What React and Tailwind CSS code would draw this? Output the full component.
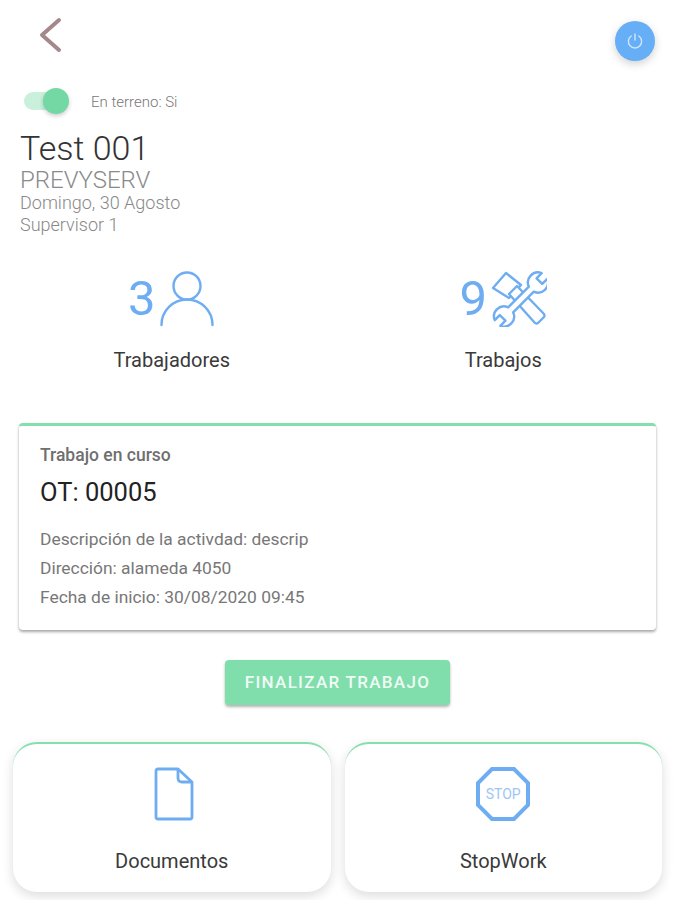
import React from 'react';

const BLUE = '#6fadf2';

const BackIcon = () => (
  <svg width="24" height="36" viewBox="0 0 24 36" fill="none" stroke="#a5888c" strokeWidth="4" strokeLinecap="round" strokeLinejoin="round">
    <path d="M20 3 L3 18 L20 33" />
  </svg>
);

const PowerIcon = () => (
  <svg width="18" height="18" viewBox="0 0 18 18" fill="none" stroke="#cfe5fb" strokeWidth="1.4" strokeLinecap="round">
    <path d="M9 2 V8" />
    <path d="M5.2 4 A6.6 6.6 0 1 0 12.8 4" />
  </svg>
);

const PersonIcon = () => (
  <svg width="56" height="56" viewBox="0 0 56 56" fill="none" stroke={BLUE} strokeWidth="2.4" strokeLinecap="round">
    <circle cx="27" cy="15" r="13.5" />
    <path d="M1.500 54 A25.500 25.500 0 0 1 52.500 54" />
  </svg>
);

const ToolsIcon = () => (
  <svg width="56" height="56" viewBox="0 0 56 56" fill="none" stroke={BLUE} strokeWidth="2.4" strokeLinejoin="round">
    <path d="M15 2 L30 14 L18 27 L2 17 Z" />
    <path d="M18 23 L26 15 L53 43 Q54 45 53 46 L47 52 Q46 53 44 52 Z" fill="#fff" />
    <g transform="translate(30 28.500) rotate(45)">
      <path
        d="M3.500 -14.600 A10 10 0 0 0 4 -33.200 L4 -26 L-4 -26 L-4 -33.200 A10 10 0 0 0 -3.500 -14.600 L-3.500 14.600 A10 10 0 0 0 -4 33.200 L-4 26 L4 26 L4 33.200 A10 10 0 0 0 3.500 14.600 Z"
        fill="#fff"
      />
    </g>
  </svg>
);

const DocumentIcon = () => (
  <svg className="ml-[4px]" width="40" height="54" viewBox="0 0 40 54" fill="none" stroke={BLUE} strokeWidth="2.800" strokeLinejoin="round">
    <path d="M4 2 H24 L38 15 V50 Q38 52 36 52 H4 Q2 52 2 50 V4 Q2 2 4 2 Z" />
    <path d="M24 2 V11 Q24 15 28 15 H38" />
  </svg>
);

const StopIcon = () => (
  <div className="relative flex h-[56px] w-[56px] items-center justify-center">
    <svg className="absolute inset-0" width="56" height="56" viewBox="0 0 56 56" fill="none" stroke={BLUE} strokeWidth="4">
      <path d="M17 3 H39 L53 17 V39 L39 53 H17 L3 39 V17 Z" />
    </svg>
    <span className="relative text-[14px] leading-[16px] text-[#9cc6f5]">STOP</span>
  </div>
);

const Stat = ({ value, label, icon }) => (
  <div className="flex flex-col items-center">
    <div className="flex items-center gap-[4px]">
      <span className="text-[49px] leading-[56px] font-normal text-[#6fadf2]">{value}</span>
      {icon}
    </div>
    <span className="mt-[21px] text-[20px] leading-[24px] text-[#3a3a3a]">{label}</span>
  </div>
);

const ActionCard = ({ icon, label }) => (
  <div className="flex h-[150px] flex-col items-center rounded-[24px] border-t-[2px] border-[#83dfad] bg-white pt-[22px] shadow-[0_4px_12px_rgba(0,0,0,0.14)]">
    <div className="flex h-[56px] items-center">{icon}</div>
    <span className="mt-[27px] text-[20px] leading-[24px] text-[#3a3a3a]">{label}</span>
  </div>
);

export default function App() {
  return (
    <div className="h-[900px] w-[675px] overflow-hidden bg-white font-['Roboto',sans-serif]">
      <div className="flex items-start justify-between pt-[17px] pr-[20px] pl-[39px]">
        <BackIcon />
        <button className="mt-[4px] flex h-[40px] w-[40px] items-center justify-center rounded-full bg-[#66aef6] shadow-[0_3px_8px_rgba(0,0,0,0.18)]">
          <PowerIcon />
        </button>
      </div>

      <div className="mt-[27px] flex items-center pl-[24px]">
        <div className="relative h-[26px] w-[45px]">
          <div className="absolute top-[4px] left-0 h-[18px] w-[40px] rounded-full bg-[#c8f0da]" />
          <div className="absolute top-0 right-0 h-[26px] w-[26px] rounded-full bg-[#74d8a4] shadow-[0_2px_4px_rgba(0,0,0,0.2)]" />
        </div>
        <span className="mt-[2px] ml-[22px] text-[15px] leading-[16px] font-light text-[#777]">En terreno: Si</span>
      </div>

      <div className="mt-[14px] pl-[20px]">
        <div className="text-[34px] leading-[40px] font-light text-[#333]">Test 001</div>
        <div className="text-[24px] leading-[24px] font-light text-[#8a8a8a]">PREVYSERV</div>
        <div className="text-[18px] leading-[22px] font-light text-[#888]">Domingo, 30 Agosto</div>
        <div className="text-[18px] leading-[22px] font-light text-[#888]">Supervisor 1</div>
      </div>

      <div className="mt-[35px] grid grid-cols-2 gap-[14px] px-[13px]">
        <Stat value="3" label="Trabajadores" icon={<PersonIcon />} />
        <Stat value="9" label="Trabajos" icon={<ToolsIcon />} />
      </div>

      <div className="mx-[19px] mt-[51px] h-[207px] rounded-[4px] border-t-[3px] border-[#83dfad] bg-white px-[21px] pt-[18px] shadow-[0_2px_3px_rgba(0,0,0,0.35)]">
        <div className="text-[17.5px] leading-[22px] font-medium text-[#6f6f6f]">Trabajo en curso</div>
        <div className="mt-[11px] text-[25.5px] leading-[30px] font-normal text-[#222]">OT: 00005</div>
        <div className="mt-[18px] text-[17.400px] leading-[29px] text-[#777]">
          <div>Descripción de la activdad: descrip</div>
          <div>Dirección: alameda 4050</div>
          <div>Fecha de inicio: 30/08/2020 09:45</div>
        </div>
      </div>

      <div className="mt-[30px] flex justify-center">
        <button className="h-[45px] w-[225px] rounded-[4px] bg-[#7fdeab] text-[17px] font-medium tracking-[1.300px] text-[#f0fbf5] shadow-[0_2px_3px_rgba(0,0,0,0.3)]">
          FINALIZAR TRABAJO
        </button>
      </div>

      <div className="mt-[37px] grid grid-cols-2 gap-[14px] px-[13px]">
        <ActionCard label="Documentos" icon={<DocumentIcon />} />
        <ActionCard label="StopWork" icon={<StopIcon />} />
      </div>
    </div>
  );
}
